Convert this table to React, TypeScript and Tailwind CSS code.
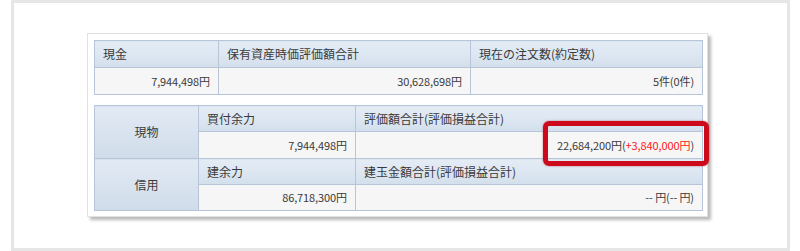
import React from 'react';

const head = 'border border-[#b6c6d8] bg-linear-to-b from-[#e4ecf5] via-[#dde7f2] to-[#d3dfec] px-2 text-left font-normal';
const cell = 'border border-[#b6c6d8] bg-[#f6f6f6] px-2 text-right text-[11px] tracking-[-0.1px]';
const side = 'border border-[#b6c6d8] bg-linear-to-b from-[#e2eaf4] to-[#d0dcea] text-center font-normal';

export default function App() {
  return (
    <div
      className="h-[251px] w-[800px] bg-white text-[12px] text-[#3a3a3a]"
      style={{ fontFamily: '"Noto Sans CJK JP", "Liberation Sans", sans-serif' }}
    >
      <div className="ml-[11px] h-[251px] w-[779px] border-[3px] border-[#e6e6e6] bg-white pt-[30px] pl-[73px]">
        {/* summary card */}
        <div className="relative w-[621px] border border-[#e2e2e2] bg-white px-[6px] pt-[6px] pb-[5px] shadow-[3px_3px_3px_rgba(0,0,0,0.28)]">
          <table className="w-[609px] table-fixed border-collapse">
            <colgroup>
              <col className="w-[124px]" />
              <col className="w-[252px]" />
              <col />
            </colgroup>
            <thead>
              <tr className="h-[27px]">
                <th className={head}>現金</th>
                <th className={head}>保有資産時価評価額合計</th>
                <th className={head}>現在の注文数(約定数)</th>
              </tr>
            </thead>
            <tbody>
              <tr className="h-[27px]">
                <td className={cell}>7,944,498円</td>
                <td className={cell}>30,628,698円</td>
                <td className={cell}>5件(0件)</td>
              </tr>
            </tbody>
          </table>

          <table className="mt-[10px] w-[609px] table-fixed border-collapse">
            <colgroup>
              <col className="w-[104px]" />
              <col className="w-[157px]" />
              <col />
            </colgroup>
            <tbody>
              <tr className="h-[26px]">
                <th rowSpan={2} className={side}>現物</th>
                <th className={head}>買付余力</th>
                <th className={head}>評価額合計(評価損益合計)</th>
              </tr>
              <tr className="h-[27px]">
                <td className={cell}>7,944,498円</td>
                <td className={cell}>
                  22,684,200円(<span className="text-[#ff1a1a]">+3,840,000円</span>)
                </td>
              </tr>
              <tr className="h-[26px]">
                <th rowSpan={2} className={side}>信用</th>
                <th className={head}>建余力</th>
                <th className={head}>建玉金額合計(評価損益合計)</th>
              </tr>
              <tr className="h-[26px]">
                <td className={cell}>86,718,300円</td>
                <td className={cell}>-- 円(-- 円)</td>
              </tr>
            </tbody>
          </table>

          {/* highlight marker */}
          <div className="absolute top-[87px] left-[455px] h-[45px] w-[166px] rounded-[6px] border-[5px] border-[#cc0a1c] shadow-[0_0_2px_rgba(160,0,20,0.6)]" />
        </div>
      </div>
    </div>
  );
}
